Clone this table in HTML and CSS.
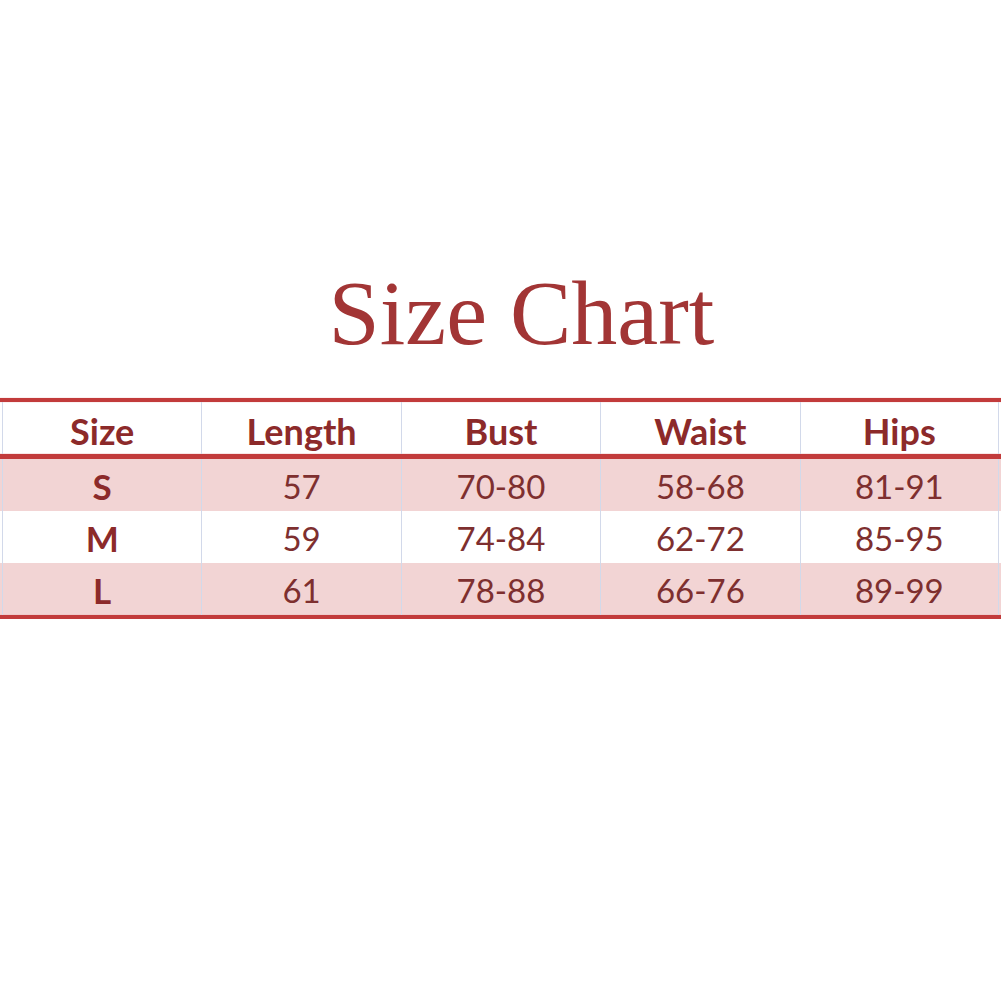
FILE: index.html
```html
<!DOCTYPE html>
<html>
<head>
<meta charset="utf-8">
<link rel="stylesheet" href="styles.css">
</head>
<body>
<div class="page">
  <h1 class="title">Size Chart</h1>
  <div class="chart">
    <div class="rule"></div>
    <div class="row head">
      <div class="cell">Size</div><div class="cell">Length</div><div class="cell">Bust</div><div class="cell">Waist</div><div class="cell">Hips</div>
    </div>
    <div class="rule mid"></div>
    <div class="row pink">
      <div class="cell bold">S</div><div class="cell">57</div><div class="cell">70-80</div><div class="cell">58-68</div><div class="cell">81-91</div>
    </div>
    <div class="row">
      <div class="cell bold">M</div><div class="cell">59</div><div class="cell">74-84</div><div class="cell">62-72</div><div class="cell">85-95</div>
    </div>
    <div class="row pink">
      <div class="cell bold">L</div><div class="cell">61</div><div class="cell">78-88</div><div class="cell">66-76</div><div class="cell">89-99</div>
    </div>
    <div class="rule"></div>
  </div>
</div>
</body>
</html>
```

FILE: styles.css
```css
html, body {
  margin: 0;
  padding: 0;
  background: #ffffff;
}
.page {
  width: 1001px;
  padding-top: 263px;
}
.title {
  margin: 0;
  padding-left: 42px;
  text-align: center;
  font-family: "Liberation Serif", serif;
  font-weight: normal;
  font-size: 92px;
  line-height: 100px;
  color: #a23535;
}
.chart {
  margin-top: 35px;
}
.rule {
  height: 4px;
  background: #c23b3b;
  box-shadow: 0 0 1px #d87070;
}
.rule.mid {
  height: 5px;
}
.row {
  display: grid;
  grid-template-columns: repeat(5, 1fr);
  padding: 0 2px;
  height: 52px;
}
.row.pink {
  background: #f2d4d4;
}
.cell {
  border-left: 1px solid #d2d9ea;
  display: flex;
  align-items: center;
  justify-content: center;
  font-family: Lato, "Open Sans", sans-serif;
  font-size: 33px;
  color: #7e2f2f;
  padding-top: 2px;
}
.cell:last-child {
  border-right: 1px solid #d2d9ea;
}
.head .cell {
  font-weight: bold;
  font-size: 36px;
  color: #8c2a2a;
  padding-top: 5px;
}
.cell.bold {
  font-weight: bold;
  font-size: 35px;
  color: #8c2a2a;
}
```
